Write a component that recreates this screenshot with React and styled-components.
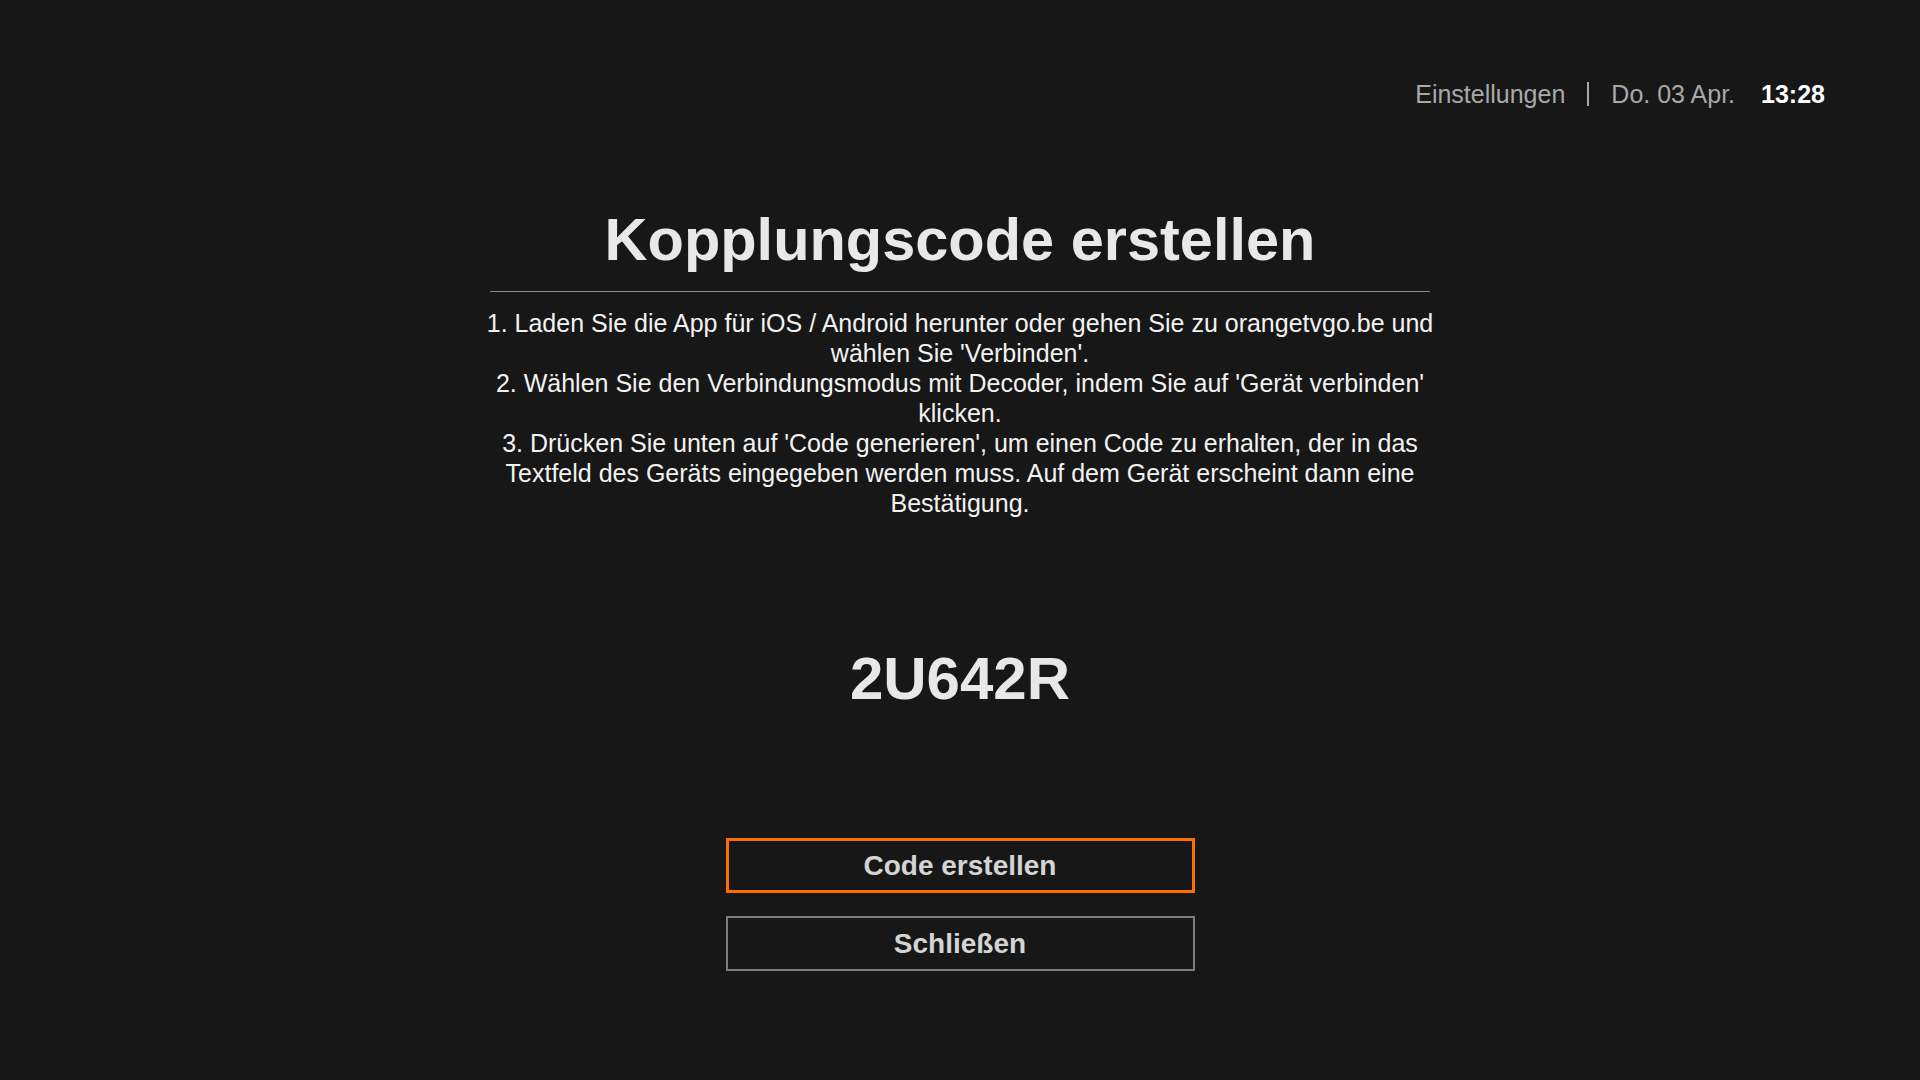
import styled, { createGlobalStyle } from 'styled-components';

const GlobalStyle = createGlobalStyle`
  html, body {
    margin: 0;
    padding: 0;
    background: #171717;
  }
  body {
    font-family: "Liberation Sans", Arial, Helvetica, sans-serif;
    -webkit-font-smoothing: antialiased;
  }
`;

const Screen = styled.div`
  width: 1920px;
  height: 1080px;
  background: #171717;
  display: flex;
  flex-direction: column;
  overflow: hidden;
`;

const TopBar = styled.header`
  display: flex;
  justify-content: flex-end;
  align-items: center;
  gap: 22px;
  padding: 79px 95px 0 0;
  height: 30px;
  font-size: 25px;
  line-height: 30px;
  color: #a9a9a9;
`;

const Divider = styled.span`
  width: 2px;
  height: 24px;
  background: #a9a9a9;
`;

const Clock = styled.span`
  color: #ffffff;
  font-weight: bold;
  margin-left: 4px;
`;

const Content = styled.main`
  width: 960px;
  margin: 96px auto 0;
  display: flex;
  flex-direction: column;
  align-items: center;
`;

const Title = styled.h1`
  margin: 0;
  font-size: 59.5px;
  line-height: 69px;
  font-weight: bold;
  color: #e8e8e8;
  text-align: center;
`;

const Rule = styled.hr`
  width: 940px;
  margin: 17px 0 0;
  border: 0;
  border-top: 1px solid #8a8a8a;
`;

const Steps = styled.div`
  margin-top: 16px;
  width: 960px;
  font-size: 25px;
  line-height: 30px;
  color: #f2f2f2;
  text-align: center;
`;

const Code = styled.div`
  margin-top: 126px;
  font-size: 60px;
  line-height: 69px;
  font-weight: bold;
  color: #e8e8e8;
`;

const Actions = styled.div`
  margin-top: 125px;
  display: flex;
  flex-direction: column;
  gap: 23px;
`;

const Button = styled.button`
  box-sizing: border-box;
  width: 469px;
  height: 55px;
  background: transparent;
  border: ${p => (p.$focused ? '3px solid #ff6d00' : '2px solid #7c7c7c')};
  color: #d4d4d4;
  font-family: inherit;
  font-size: 28px;
  font-weight: bold;
  padding: 0;
  cursor: pointer;
`;

const App = () => {
  return (
    <>
      <GlobalStyle />
      <Screen>
        <TopBar>
          <span>Einstellungen</span>
          <Divider />
          <span>Do. 03 Apr.</span>
          <Clock>13:28</Clock>
        </TopBar>
        <Content>
          <Title>Kopplungscode erstellen</Title>
          <Rule />
          <Steps>
            1. Laden Sie die App für iOS / Android herunter oder gehen Sie zu orangetvgo.be und
            wählen Sie 'Verbinden'.
            <br />
            2. Wählen Sie den Verbindungsmodus mit Decoder, indem Sie auf 'Gerät verbinden'
            klicken.
            <br />
            3. Drücken Sie unten auf 'Code generieren', um einen Code zu erhalten, der in das
            Textfeld des Geräts eingegeben werden muss. Auf dem Gerät erscheint dann eine
            Bestätigung.
          </Steps>
          <Code>2U642R</Code>
          <Actions>
            <Button $focused>Code erstellen</Button>
            <Button>Schließen</Button>
          </Actions>
        </Content>
      </Screen>
    </>
  );
};

export default App;
